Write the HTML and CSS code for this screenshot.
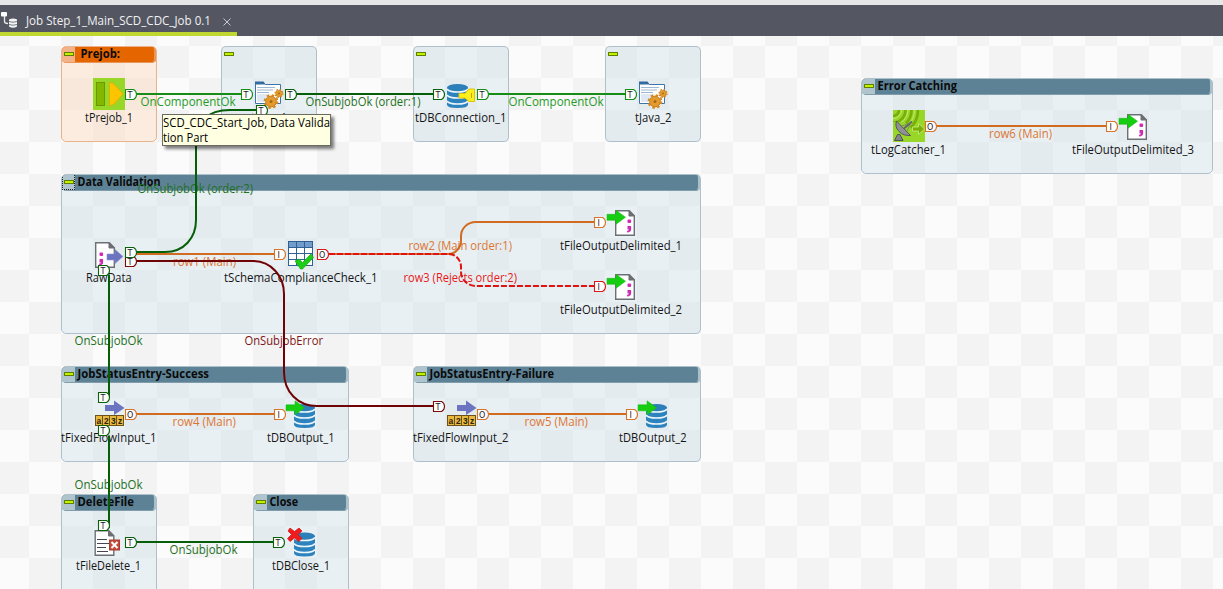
FILE: index.html
```html
<!DOCTYPE html>
<html lang="en">
<head>
<meta charset="utf-8">
<title>Job Step_1_Main_SCD_CDC_Job 0.1</title>
<link rel="stylesheet" href="styles.css">
</head>
<body>
<header class="tabbar">
  <div class="tab">
    <svg class="tab-icon" width="17" height="17" viewBox="0 0 17 17">
      <rect x="1" y="0" width="6" height="4.5" rx="1" fill="#fff"/>
      <path d="M4.5 4V9.500Q4.500 11.500 8 11.500" fill="none" stroke="#e9eaec" stroke-width="1.300"/>
      <path d="M9 7.500q4-2 8 0v7q-4 2.500-8 0z" fill="#f4f4f4"/>
      <path d="M9 9.500q4 1.500 8 0M9 12.500q4 1.500 8 0" fill="none" stroke="#7b7d86"/>
    </svg>
    <svg class="tab-title" width="186" height="20"><text x="0" y="14" textLength="185" lengthAdjust="spacingAndGlyphs">Job Step_1_Main_SCD_CDC_Job 0.1</text></svg>
    <svg class="tab-close" width="8" height="8" viewBox="0 0 8 8"><path d="M.5.5l7 7M7.500.5l-7 7" stroke="#c9cacf" fill="none"/></svg>
  </div>
</header>
<main class="canvas">
  <section class="group prejob" style="left:61px;top:10px;width:96px;height:96px"><div class="head"><i class="toggle"></i><svg class="title" width="60" height="17"><text x="5.500" y="12" textLength="39.500" lengthAdjust="spacingAndGlyphs">Prejob:</text></svg></div></section>
  <section class="group bare" style="left:221px;top:10px;width:96px;height:96px"><div class="head"><i class="toggle"></i></div></section>
  <section class="group bare" style="left:413px;top:10px;width:96px;height:96px"><div class="head"><i class="toggle"></i></div></section>
  <section class="group bare" style="left:605px;top:10px;width:96px;height:96px"><div class="head"><i class="toggle"></i></div></section>
  <section class="group" style="left:861px;top:42px;width:352px;height:96px"><div class="head"><i class="toggle"></i><svg class="title" width="120" height="17"><text x="2.500" y="12" textLength="79.500" lengthAdjust="spacingAndGlyphs">Error Catching</text></svg></div></section>
  <section class="group selected" style="left:61px;top:138px;width:640px;height:160px"><div class="head"><i class="toggle"></i><svg class="title" width="120" height="17"><text x="2.500" y="12" textLength="83" lengthAdjust="spacingAndGlyphs">Data Validation</text></svg></div></section>
  <section class="group" style="left:61px;top:330px;width:288px;height:96px"><div class="head"><i class="toggle"></i><svg class="title" width="160" height="17"><text x="2.500" y="12" textLength="131.500" lengthAdjust="spacingAndGlyphs">JobStatusEntry-Success</text></svg></div></section>
  <section class="group" style="left:413px;top:330px;width:288px;height:96px"><div class="head"><i class="toggle"></i><svg class="title" width="160" height="17"><text x="2.500" y="12" textLength="124.500" lengthAdjust="spacingAndGlyphs">JobStatusEntry-Failure</text></svg></div></section>
  <section class="group" style="left:61px;top:458px;width:96px;height:112px"><div class="head"><i class="toggle"></i><svg class="title" width="76" height="17"><text x="2.500" y="12" textLength="56.500" lengthAdjust="spacingAndGlyphs">DeleteFile</text></svg></div></section>
  <section class="group" style="left:253px;top:458px;width:96px;height:112px"><div class="head"><i class="toggle"></i><svg class="title" width="76" height="17"><text x="2.500" y="12" textLength="28.500" lengthAdjust="spacingAndGlyphs">Close</text></svg></div></section>

  <svg class="diagram" width="1223" height="553" viewBox="0 36 1223 553">
    <defs>
      <clipPath id="tile"><rect width="32" height="32"/></clipPath>
      <path id="port" d="M.5.5h8q3 1.500 3 5t-3 5h-8z"/>
      <path id="arrow" d="M0 4.300h9V.3l9.500 7-9.500 7v-4H0z"/>
      <g id="cylinder">
        <path d="M0 3.500v17q0 3.500 10.500 3.500T21 20.500v-17z" fill="#2d83bd"/>
        <ellipse cx="10.500" cy="3.500" rx="10.500" ry="3.500" fill="#2d7fba"/>
        <path d="M0 5q2 3 10.500 3T21 5M0 11q2 3 10.500 3T21 11M0 17q2 3 10.500 3T21 17" fill="none" stroke="#edf6fb" stroke-width="1.700"/>
      </g>
      <g id="page">
        <path d="M.7.7h13.600l5 5v19.600H.7z" fill="#fff" stroke="#6d6f74" stroke-width="1.400"/>
        <path d="M14 .5l5.500 5.500H14z" fill="#6d6f74" stroke="#6d6f74"/>
      </g>
      <g id="semi" fill="#cf2bb5"><rect x="0" y="0" width="3.600" height="3.600" rx="1"/><path d="M0 6.500h3.600v3.500q0 2.500-4 3v-1.700q2-.4 2-1.300H0z"/></g>
      <g id="gear">
        <circle r="5.400" fill="#e39a2e" stroke="#c87b18"/>
        <circle r="6.400" fill="none" stroke="#d58822" stroke-width="2" stroke-dasharray="2.510"/>
        <circle r="1.500" fill="#a86812"/>
      </g>
      <g id="ic-prejob">
        <rect width="32" height="32" fill="#98d628"/>
        <rect x="3.500" y="4.500" width="8" height="23" fill="#84b700" stroke="#6b9a00"/>
        <path d="M16.500 4v24l4.500-2 9-10-9-10z" fill="#ffc400" stroke="#dcb000" stroke-width=".8"/>
      </g>
      <g id="ic-java">
        <path d="M2.500 4.500h8l2 2h15v19h-25z" fill="#fff" stroke="#3e74aa"/>
        <path d="M2 3.500h8.500l2 3H2z" fill="#32699e"/>
        <path d="M4 9.500h18M4 12h16M4 14.500h12" stroke="#9cb8d4" fill="none"/>
        <path d="M4 24h10v-8H4z" fill="#dfe9f5"/>
        <use href="#gear" transform="translate(18 23.500)"/>
        <use href="#gear" transform="translate(26 15.500) scale(.62)"/>
      </g>
      <g id="ic-conn">
        <use href="#cylinder" transform="translate(2 6)"/>
        <path d="M14 15.500h6l4-4.500h5.500v12.500H24L20 20h-6z" fill="#fff01c" stroke="#dfc500"/>
        <path d="M26.500 15v5" stroke="#c5a800"/>
      </g>
      <g id="ic-fileout">
        <use href="#page" x="10" y="4"/>
        <use href="#semi" x="22.500" y="13.500"/>
        <use href="#arrow" x="2" y="4" fill="#16cd12" stroke="#13b410" stroke-width=".5"/>
      </g>
      <g id="ic-raw">
        <use href="#page" x="2" y="4"/>
        <use href="#semi" x="6.500" y="14.500"/>
        <path d="M14 16h8v-4.500l8 7-8 7V22h-8z" fill="#6c74c2" stroke="#8b91d2" stroke-width=".6"/>
      </g>
      <g id="ic-schema">
        <rect x="3.500" y="3.500" width="24" height="24" fill="#fff"/>
        <rect x="3.500" y="3.500" width="24" height="6" fill="#719ccb"/>
        <path d="M3.500 3v25M11.500 3v25M19.500 3v25M27.500 3v25M3 3.500h25M3 9.500h25M3 15.500h25M3 21.500h25M3 27.500h25" stroke="#2f6195" fill="none"/>
        <path d="M10 23l4-2 3.500 3.500L26 16l2.500 3.500L17.500 31h-2z" fill="#1ccc16" stroke="#12a810" stroke-width=".7"/>
      </g>
      <g id="ic-fixed">
        <path d="M12 7h9V2.500l10.500 7.500L21 17v-4h-9z" fill="#6c74c2"/>
        <rect x="2.500" y="17.500" width="28" height="10" fill="#e8b83f" stroke="#6d531b"/>
        <path d="M9.500 17v11M16.500 17v11M23.500 17v11" stroke="#6d531b"/>
        <text class="cell" x="3.500" y="25.800">a</text><text class="cell" x="11" y="25.800">2</text><text class="cell" x="18" y="25.800">3</text><text class="cell" x="25" y="25.800">z</text>
      </g>
      <g id="ic-dbout">
        <use href="#cylinder" x="9" y="6"/>
        <use href="#arrow" x="1" y="2.500" fill="#16cd12" stroke="#13b410" stroke-width=".5"/>
      </g>
      <g id="ic-delete">
        <use href="#page" x="1.500" y="4"/>
        <path d="M4 13.500h10M4 17.500h12M4 21.500h9M4 25.500h11" stroke="#44474c" fill="none"/>
        <rect x="16.500" y="14" width="10" height="10" fill="#c84b3a" stroke="#a83c2e"/>
        <path d="M18.500 16l6 6M24.500 16l-6 6" stroke="#fff" stroke-width="2"/>
      </g>
      <g id="ic-dbclose">
        <use href="#cylinder" x="9" y="6.500"/>
        <path d="M5 2l4.500 3.500L14 2l3 3-4 3.500 4 4-3.500 3-4-3.500-4.500 3.500-2.500-3L6.500 8.500 3 5z" fill="#ee1c1c" stroke="#d01010" stroke-width=".7"/>
      </g>
      <g id="ic-log" clip-path="url(#tile)">
        <rect width="32" height="32" fill="#98d628"/>
        <g fill="none" stroke="#79ad08" stroke-width="2.600"><circle r="6"/><circle r="12.500"/><circle r="18.500"/><circle r="25"/></g>
        <g fill="none" stroke="#c3ea72"><circle r="8.500"/><circle r="15"/><circle r="21.500"/></g>
        <path d="M0 12h12l16 16v4H0z" fill="#98d628"/>
        <path d="M19.500 17h6v-3.500l6 5.500-6 5.500V21h-6z" fill="#7cae08" stroke="#c8ef7a" stroke-width=".8"/>
        <path d="M1.500 30.500l3-6h2.500l3 6z" fill="#85868c" stroke="#505257"/>
        <path d="M3.500 11Q1.500 17 6 21.500T17.500 25.500z" fill="#909196" stroke="#55575c"/>
        <path d="M11 18.500l8-7" stroke="#606268" stroke-width="1.800"/>
        <path d="M9 16l9-3.500L14 21" stroke="#707278" fill="none" stroke-width=".8"/>
      </g>
    </defs>

    <!-- component icons -->
    <use href="#ic-prejob" x="93" y="78"/>
    <use href="#ic-java" x="253" y="78"/>
    <use href="#ic-conn" x="445" y="78"/>
    <use href="#ic-java" x="637" y="78"/>
    <use href="#ic-log" x="893" y="110"/>
    <use href="#ic-fileout" x="1117" y="110"/>
    <use href="#ic-raw" x="93" y="238"/>
    <use href="#ic-schema" x="285" y="238"/>
    <use href="#ic-fileout" x="605" y="206"/>
    <use href="#ic-fileout" x="605" y="270"/>
    <use href="#ic-fixed" x="93" y="398"/>
    <use href="#ic-dbout" x="285" y="398"/>
    <use href="#ic-fixed" x="445" y="398"/>
    <use href="#ic-dbout" x="637" y="398"/>
    <use href="#ic-delete" x="93" y="526"/>
    <use href="#ic-dbclose" x="285" y="526"/>

    <!-- component names -->
    <g class="name">
      <text x="85" y="122" textLength="48" lengthAdjust="spacingAndGlyphs">tPrejob_1</text>
      <text x="251" y="122" textLength="36" lengthAdjust="spacingAndGlyphs">tJava_1</text>
      <text x="415" y="122" textLength="91.500" lengthAdjust="spacingAndGlyphs">tDBConnection_1</text>
      <text x="635" y="122" textLength="36.500" lengthAdjust="spacingAndGlyphs">tJava_2</text>
      <text x="871" y="154" textLength="75" lengthAdjust="spacingAndGlyphs">tLogCatcher_1</text>
      <text x="1072" y="154" textLength="122" lengthAdjust="spacingAndGlyphs">tFileOutputDelimited_3</text>
      <text x="86" y="282" textLength="45.500" lengthAdjust="spacingAndGlyphs">RawData</text>
      <text x="224" y="282" textLength="153.500" lengthAdjust="spacingAndGlyphs">tSchemaComplianceCheck_1</text>
      <text x="560" y="250" textLength="122" lengthAdjust="spacingAndGlyphs">tFileOutputDelimited_1</text>
      <text x="560" y="314" textLength="122" lengthAdjust="spacingAndGlyphs">tFileOutputDelimited_2</text>
      <text x="61" y="442" textLength="95.500" lengthAdjust="spacingAndGlyphs">tFixedFlowInput_1</text>
      <text x="267" y="442" textLength="67.500" lengthAdjust="spacingAndGlyphs">tDBOutput_1</text>
      <text x="413" y="442" textLength="95.500" lengthAdjust="spacingAndGlyphs">tFixedFlowInput_2</text>
      <text x="619" y="442" textLength="67.500" lengthAdjust="spacingAndGlyphs">tDBOutput_2</text>
      <text x="76" y="570" textLength="65" lengthAdjust="spacingAndGlyphs">tFileDelete_1</text>
      <text x="272" y="570" textLength="58" lengthAdjust="spacingAndGlyphs">tDBClose_1</text>
    </g>

    <!-- link names -->
    <g class="link-name">
      <text class="ok" x="140.500" y="106" textLength="95" lengthAdjust="spacingAndGlyphs">OnComponentOk</text>
      <text class="sub" x="305.500" y="106" textLength="115" lengthAdjust="spacingAndGlyphs">OnSubjobOk (order:1)</text>
      <text class="ok" x="508.500" y="106" textLength="95" lengthAdjust="spacingAndGlyphs">OnComponentOk</text>
      <text class="row" x="989" y="138" textLength="63" lengthAdjust="spacingAndGlyphs">row6 (Main)</text>
      <text class="sub" x="137.500" y="193" textLength="115.500" lengthAdjust="spacingAndGlyphs">OnSubjobOk (order:2)</text>
      <text class="row" x="173" y="266" textLength="63" lengthAdjust="spacingAndGlyphs">row1 (Main)</text>
      <text class="sub" x="74.500" y="345" textLength="68" lengthAdjust="spacingAndGlyphs">OnSubjobOk</text>
      <text class="err" x="244.500" y="345" textLength="78.500" lengthAdjust="spacingAndGlyphs">OnSubjobError</text>
      <text class="row" x="408.500" y="250" textLength="103.500" lengthAdjust="spacingAndGlyphs">row2 (Main order:1)</text>
      <text class="rej" x="403.500" y="282" textLength="113.500" lengthAdjust="spacingAndGlyphs">row3 (Rejects order:2)</text>
      <text class="row" x="172.500" y="426" textLength="63.500" lengthAdjust="spacingAndGlyphs">row4 (Main)</text>
      <text class="row" x="524.500" y="426" textLength="63.500" lengthAdjust="spacingAndGlyphs">row5 (Main)</text>
      <text class="sub" x="74.500" y="489" textLength="68" lengthAdjust="spacingAndGlyphs">OnSubjobOk</text>
      <text class="sub" x="169.500" y="554" textLength="68" lengthAdjust="spacingAndGlyphs">OnSubjobOk</text>
    </g>

    <!-- links -->
    <g class="wires">
      <path class="w-ok" d="M136 94H241M488 94H625"/>
      <path class="w-sub" d="M297 94H433M257 110H230C208 110 196 120 196 145V220C196 238 184 252 165 252H137M109 275V397M109 436V528M136 542H273"/>
      <path class="w-row" d="M136 254H274M136 414H274M488 414H626M936 126H1106"/>
      <path class="w-row" d="M329 254H448C456 254 461 247 461 241V236C461 229 467 222 476 222H594"/>
      <path class="w-rej" d="M329 254H448C456 254 461 260 461 267V272C461 279 467 286 476 286H594"/>
      <path class="w-err" d="M137 261H253C271 261 284 276 284 294V372C284 392 298 406 317 406H433"/>
    </g>

    <!-- ports -->
    <g class="p-ok">
      <g transform="translate(125 89)"><use href="#port"/><text x="2.500" y="8.500">T</text></g>
      <g transform="translate(241 89)"><use href="#port"/><text x="2.500" y="8.500">T</text></g>
      <g transform="translate(477 89)"><use href="#port"/><text x="2.500" y="8.500">T</text></g>
      <g transform="translate(625 89)"><use href="#port"/><text x="2.500" y="8.500">T</text></g>
    </g>
    <g class="p-err">
      <g transform="translate(125 256)"><use href="#port"/><text x="2.500" y="8.500">T</text></g>
      <g transform="translate(433 401)"><use href="#port"/><text x="2.500" y="8.500">T</text></g>
    </g>
    <g class="p-sub">
      <g transform="translate(285 89)"><use href="#port"/><text x="2.500" y="8.500">T</text></g>
      <g transform="translate(433 89)"><use href="#port"/><text x="2.500" y="8.500">T</text></g>
      <g transform="translate(256 105)"><use href="#port"/><text x="2.500" y="8.500">T</text></g>
      <g transform="translate(125 247)"><use href="#port"/><text x="2.500" y="8.500">T</text></g>
      <g transform="translate(98 265)"><use href="#port"/><text x="2.500" y="8.500">T</text></g>
      <g transform="translate(98 392)"><use href="#port"/><text x="2.500" y="8.500">T</text></g>
      <g transform="translate(98 425)"><use href="#port"/><text x="2.500" y="8.500">T</text></g>
      <g transform="translate(98 520)"><use href="#port"/><text x="2.500" y="8.500">T</text></g>
      <g transform="translate(125 537)"><use href="#port"/><text x="2.500" y="8.500">T</text></g>
      <g transform="translate(273 537)"><use href="#port"/><text x="2.500" y="8.500">T</text></g>
    </g>
    <g class="p-row">
      <g transform="translate(925 121)"><use href="#port"/><text x="2" y="8.500">O</text></g>
      <g transform="translate(1106 121)"><use href="#port"/><text x="3.500" y="8.500">I</text></g>
      <g transform="translate(274 249)"><use href="#port"/><text x="3.500" y="8.500">I</text></g>
      <g transform="translate(594 217)"><use href="#port"/><text x="3.500" y="8.500">I</text></g>
      <g transform="translate(125 409)"><use href="#port"/><text x="2" y="8.500">O</text></g>
      <g transform="translate(274 409)"><use href="#port"/><text x="3.500" y="8.500">I</text></g>
      <g transform="translate(477 409)"><use href="#port"/><text x="2" y="8.500">O</text></g>
      <g transform="translate(626 409)"><use href="#port"/><text x="3.500" y="8.500">I</text></g>
    </g>
    <g class="p-rej">
      <g transform="translate(317 249)"><use href="#port"/><text x="2" y="8.500">O</text></g>
      <g transform="translate(594 281)"><use href="#port"/><text x="3.500" y="8.500">I</text></g>
    </g>
  </svg>

  <div class="tooltip">
    <svg width="168" height="31"><text x="0" y="12" textLength="167" lengthAdjust="spacingAndGlyphs">SCD_CDC_Start_Job, Data Valida</text><text x="0" y="27" textLength="45" lengthAdjust="spacingAndGlyphs">tion Part</text></svg>
  </div>
</main>
</body>
</html>
```
FILE: styles.css
```css
*, *::before { box-sizing: border-box; }
body {
  margin: 0;
  width: 1223px;
  height: 589px;
  overflow: hidden;
  display: flex;
  flex-direction: column;
  font-family: "Open Sans", "Noto Sans", sans-serif;
  font-size: 12px;
}
svg { display: block; flex: none; overflow: visible; }
.tabbar {
  height: 36px;
  flex: none;
  background: #545762;
  border-top: 5px solid #e6e6e6;
}
.tab {
  width: 237px;
  height: 31px;
  display: flex;
  align-items: center;
  border-bottom: 4px solid #bfd730;
}
.tab-icon { margin-top: 3px; }
.tab-title { margin: 4px 0 0 9px; fill: #f1f1f3; }
.tab-close { margin: 6px 0 0 11px; }

.canvas {
  position: relative;
  flex: 1;
  overflow: hidden;
  background: conic-gradient(#fbfbfb 25%, #f3f3f3 0 50%, #fbfbfb 0 75%, #f3f3f3 0) 29px 10px / 64px 64px;
}
.group {
  position: absolute;
  overflow: hidden;
  border: 1px solid #aec1cb;
  border-radius: 5px;
  background: rgba(200, 222, 232, .35);
}
.head {
  display: flex;
  height: 17px;
  margin: -1px;
  border: solid #7f9dac;
  border-width: 0 1px 1px;
  border-right: 3px solid #a9bfca;
  border-radius: 5px;
  background: #5e8295;
}
.toggle {
  width: 13px;
  flex: none;
  background: #b0c4ce;
}
.toggle::before {
  content: "";
  display: block;
  width: 10px;
  height: 4px;
  margin: 6px 0 0 2px;
  border: 1px solid #5f8000;
  background: #c4f000;
}
.title { font-weight: 700; fill: #0a0a0a; }
.bare .head { background: none; border-color: transparent; }
.bare .toggle { background: none; }
.selected .toggle { outline: 1px dotted #222; outline-offset: -1px; }
.prejob { border-color: #e9b48c; background: rgba(253, 222, 195, .5); }
.prejob .head { background: #e56600; border-color: #e8965a; }
.prejob .toggle { background: #f3b288; }

.diagram { position: absolute; inset: 0; }
.name { fill: #151515; }
.link-name .ok { fill: #269a26; }
.link-name .sub { fill: #1d701d; }
.link-name .row { fill: #dc7632; }
.link-name .rej { fill: #e81818; }
.link-name .err { fill: #7d1515; }
.wires { fill: none; stroke-width: 2; }
.w-ok { stroke: #178c17; }
.w-sub { stroke: #065f08; }
.w-row { stroke: #cf6c22; }
.w-rej { stroke: #e01212; stroke-dasharray: 6 2; }
.w-err { stroke: #6f0306; }
.p-ok, .p-sub, .p-row, .p-rej, .p-err { fill: #fff; stroke-width: 1.1; }
.p-ok { stroke: #178c17; }
.p-sub { stroke: #0b600b; }
.p-row { stroke: #d9742c; }
.p-rej { stroke: #d81a1a; }
.p-err { stroke: #7a0a0a; }
.diagram g[class^="p-"] text {
  font: 8px "DejaVu Sans", sans-serif;
  fill: #222;
  stroke: none;
}
.cell { font: bold 8.5px "Liberation Sans", sans-serif; fill: #2c2108; }

.tooltip {
  position: absolute;
  left: 162px;
  top: 78px;
  width: 169px;
  height: 32px;
  border: 1px solid #6b6b62;
  background: #ffffe1;
  box-shadow: 3px 3px 3px rgba(0, 0, 0, .5);
}
```
